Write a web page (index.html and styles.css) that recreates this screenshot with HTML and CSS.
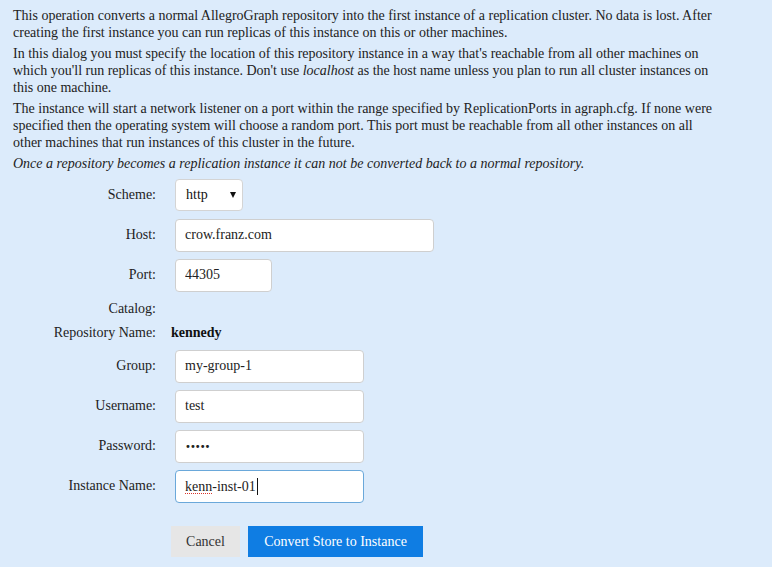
FILE: index.html
```html
<!DOCTYPE html>
<html>
<head>
<meta charset="utf-8">
<link rel="stylesheet" href="styles.css">
</head>
<body>
<div class="dialog">
  <p class="para">This operation converts a normal AllegroGraph repository into the first instance of a replication cluster. No data is lost. After<br>creating the first instance you can run replicas of this instance on this or other machines.</p>
  <p class="para">In this dialog you must specify the location of this repository instance in a way that's reachable from all other machines on<br>which you'll run replicas of this instance. Don't use <em>localhost</em> as the host name unless you plan to run all cluster instances on<br>this one machine.</p>
  <p class="para">The instance will start a network listener on a port within the range specified by ReplicationPorts in agraph.cfg. If none were<br>specified then the operating system will choose a random port. This port must be reachable from all other instances on all<br>other machines that run instances of this cluster in the future.</p>
  <p class="para note">Once a repository becomes a replication instance it can not be converted back to a normal repository.</p>

  <div class="form">
    <div class="row row-input">
      <label class="label">Scheme:</label>
      <div class="value">
        <div class="select"><span>http</span><span class="arrow"></span></div>
      </div>
    </div>
    <div class="row row-input">
      <label class="label">Host:</label>
      <div class="value"><input class="field field-host" type="text" value="crow.franz.com"></div>
    </div>
    <div class="row row-input">
      <label class="label">Port:</label>
      <div class="value"><input class="field field-port" type="text" value="44305"></div>
    </div>
    <div class="row row-catalog">
      <label class="label">Catalog:</label>
      <div class="value"></div>
    </div>
    <div class="row row-repo">
      <label class="label">Repository Name:</label>
      <div class="value"><strong class="repo-name">kennedy</strong></div>
    </div>
    <div class="row row-input row-group">
      <label class="label">Group:</label>
      <div class="value"><input class="field field-mid" type="text" value="my-group-1"></div>
    </div>
    <div class="row row-input">
      <label class="label">Username:</label>
      <div class="value"><input class="field field-mid" type="text" value="test"></div>
    </div>
    <div class="row row-input">
      <label class="label">Password:</label>
      <div class="value"><div class="field field-mid dots">•••••</div></div>
    </div>
    <div class="row row-input">
      <label class="label">Instance Name:</label>
      <div class="value"><div class="field field-mid focused"><span class="misspelled">kenn</span>-inst-01<span class="caret"></span></div></div>
    </div>
    <div class="row row-buttons">
      <div class="label"></div>
      <div class="value buttons">
        <button class="btn btn-cancel">Cancel</button>
        <button class="btn btn-primary">Convert Store to Instance</button>
      </div>
    </div>
  </div>
</div>
</body>
</html>
```

FILE: styles.css
```css
html, body {
  margin: 0;
  padding: 0;
  background: #dcebfb;
}
body {
  font-family: "Liberation Serif", "Times New Roman", serif;
  font-size: 14px;
  color: #222;
  width: 772px;
  height: 567px;
  overflow: hidden;
}
.dialog {
  padding: 7px 13px 0 13px;
}
.para {
  margin: 0 0 4px 0;
  line-height: 17px;
  white-space: nowrap;
}
.para em, .note {
  font-style: italic;
}
.note {
  margin-bottom: 0;
}
.form {
  display: flex;
  flex-direction: column;
  margin-top: 3px;
}
.row {
  display: flex;
  align-items: center;
}
.row-input {
  height: 40px;
}
.row-catalog {
  height: 28px;
}
.row-repo {
  height: 20px;
}
.row-group {
  margin-top: 3px;
}
.row-buttons {
  margin-top: 20px;
  height: 31px;
}
.label {
  width: 143px;
  text-align: right;
  color: #222;
  flex: none;
}
.value {
  margin-left: 15px;
  display: flex;
  align-items: center;
}
.repo-name {
  font-weight: bold;
  color: #111;
}
.field {
  box-sizing: border-box;
  height: 33px;
  margin: 0 0 0 4px;
  padding: 7px 9px;
  font-family: "Liberation Serif", "Times New Roman", serif;
  font-size: 14px;
  line-height: 17px;
  color: #222;
  background: #fff;
  border: 1px solid #cfcfcf;
  border-radius: 4px;
  outline: none;
  display: flex;
  align-items: center;
}
.field-host { width: 259px; }
.field-port { width: 97px; }
.field-mid { width: 189px; }
.dots {
  font-size: 10px;
  letter-spacing: -1px;
  font-family: "DejaVu Sans", sans-serif;
}
.focused {
  border-color: #6aa8da;
}
.misspelled {
  text-decoration: underline dotted #d9342b;
  text-decoration-thickness: 1px;
  text-underline-offset: 2px;
}
.caret {
  display: inline-block;
  width: 1px;
  height: 17px;
  background: #111;
  margin-left: 1px;
}
.select {
  box-sizing: border-box;
  width: 68px;
  height: 32px;
  margin-left: 4px;
  background: #fff;
  border: 1px solid #d4d4d4;
  border-radius: 4px;
  display: flex;
  align-items: center;
  justify-content: space-between;
  padding: 0 6px 0 10px;
  color: #111;
}
.arrow {
  width: 0;
  height: 0;
  border-left: 3.5px solid transparent;
  border-right: 3.5px solid transparent;
  border-top: 6px solid #111;
}
.buttons {
  gap: 8px;
}
.btn {
  font-family: "Liberation Serif", "Times New Roman", serif;
  font-size: 14px;
  height: 31px;
  border: none;
  border-radius: 0;
  cursor: pointer;
}
.btn-cancel {
  width: 69px;
  background: #e6e6e6;
  color: #333;
}
.btn-primary {
  width: 175px;
  background: #0f7de3;
  color: #fff;
}
```
